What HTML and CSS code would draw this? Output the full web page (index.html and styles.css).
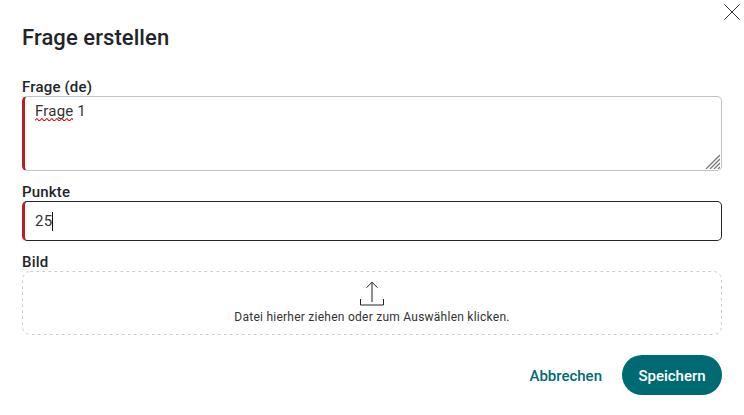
FILE: index.html
```html
<!DOCTYPE html>
<html lang="de">
<head>
<meta charset="utf-8">
<title>Frage erstellen</title>
<link rel="stylesheet" href="styles.css">
</head>
<body>
<div class="dialog">
  <button class="close" aria-label="Schließen">
    <svg width="16" height="16" viewBox="0 0 16 16"><path d="M0.5 0.5L15.5 15.5M15.5 0.5L0.5 15.5" stroke="#333" stroke-width="1" fill="none"/></svg>
  </button>
  <h1 class="title">Frage erstellen</h1>
  <div class="field">
    <label class="label">Frage (de)</label>
    <div class="control area"><span class="misspelled">Frage</span> 1
      <svg class="grip" width="15" height="15" viewBox="0 0 15 15"><path d="M1 15L15 1M5 15L15 5M9 15L15 9M13 15L15 13" stroke="#777" stroke-width="1.3" fill="none"/></svg>
    </div>
  </div>
  <div class="field">
    <label class="label">Punkte</label>
    <div class="control single">25<span class="caret"></span></div>
  </div>
  <div class="field">
    <label class="label">Bild</label>
    <div class="drop">
      <svg class="drop-frame" width="700" height="64" viewBox="0 0 700 64"><rect x="0.5" y="0.5" width="699" height="63" rx="8" fill="none" stroke="#c6c9cc" stroke-width="1" stroke-dasharray="2.5 3.5"/></svg>
      <svg class="upload" width="24" height="25" viewBox="0 0 24 25"><path d="M12 21V1.2M6.5 6.7L12 1.2L17.5 6.7M0.5 18V24H23.5V18" stroke="#222" stroke-width="1" fill="none"/></svg>
      <span class="drop-text">Datei hierher ziehen oder zum Auswählen klicken.</span>
    </div>
  </div>
  <div class="actions">
    <button class="cancel">Abbrechen</button>
    <button class="save">Speichern</button>
  </div>
</div>
</body>
</html>
```
FILE: styles.css
```css
* { box-sizing: border-box; }
html, body { margin: 0; height: 100%; background: #fff; }
body { font-family: Roboto, "Liberation Sans", sans-serif; color: #212529; overflow: hidden; }
.dialog { position: relative; padding: 25px 22px 0; }
.close { position: absolute; top: 4px; right: 4px; width: 16px; height: 16px; padding: 0; border: 0; background: none; line-height: 0; }
.title { margin: 0 0 25px; font-size: 22px; line-height: 26px; font-weight: 500; color: #212529; letter-spacing: .08px; }
.field { margin-bottom: 10px; }
.label { display: block; height: 20px; padding-top: 2px; font-size: 15px; line-height: 18px; font-weight: 500; letter-spacing: .17px; }
.control { border: 1px solid #212529; border-left: 3px solid #c21b1f; border-radius: 5px; padding: 0 10px; font-size: 15px; color: #333; letter-spacing: .2px; }
.area { position: relative; height: 75px; padding-top: 4px; line-height: 20px; border-color: #b9c5c8; border-left-color: #c21b1f; }
.grip { position: absolute; right: 1px; bottom: 1px; }
.single { height: 40px; line-height: 38px; display: flex; align-items: center; }
.misspelled { position: relative; }
.misspelled::after { content: ""; position: absolute; left: 0; right: 0; bottom: -1px; height: 3px; background: url("data:image/svg+xml,%3Csvg xmlns='http://www.w3.org/2000/svg' width='5' height='3'%3E%3Cpath d='M0 2.5L1.5 .7H2.2L3.7 2.5H5' stroke='%23d3121a' stroke-width='1.1' fill='none'/%3E%3C/svg%3E") repeat-x; }
.caret { display: inline-block; width: 1px; height: 19px; background: #111; }
.drop { position: relative; height: 64px; display: flex; flex-direction: column; align-items: center; padding-top: 10px; }
.drop-frame { position: absolute; left: 0; top: 0; }
.upload { display: block; }
.drop-text { margin-top: 3px; font-size: 12px; line-height: 16px; color: #333; letter-spacing: .25px; }
.actions { display: flex; justify-content: flex-end; align-items: center; gap: 20px; margin-top: 20px; }
.cancel, .save { font-family: inherit; font-size: 15px; font-weight: 500; border: 0; cursor: pointer; padding: 2px 0 0; }
.cancel { background: none; color: #006a73; }
.save { width: 100px; height: 40px; border-radius: 20px; background: #006a73; color: #fff; }
```
